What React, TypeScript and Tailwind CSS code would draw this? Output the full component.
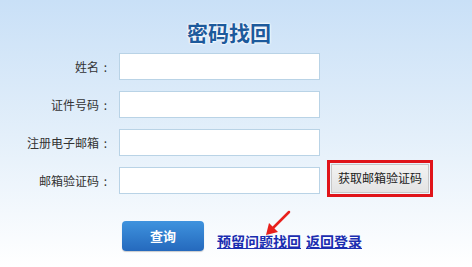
const FONT = { fontFamily: '"Microsoft YaHei", "Noto Sans CJK SC", "Noto Sans", sans-serif' };

const fields = ['姓名', '证件号码', '注册电子邮箱', '邮箱验证码'];

export default function App() {
  return (
    <div
      className="relative h-[267px] w-[472px] overflow-hidden bg-gradient-to-b from-[#c9e0f7] via-[#e3effa] to-white"
      style={FONT}
    >
      <h1
        className="pt-[19px] text-center text-[21px] font-bold leading-[26px] text-[#1d5a9c]"
        style={{ textShadow: '0 0 2px #fff, 0 0 2px #fff, 0 0 3px #fff' }}
      >
        <span className="relative left-[-7px]">密码找回</span>
      </h1>

      <div className="mt-[8px] flex flex-col gap-[11px]">
        {fields.map((label, i) => (
          <div key={label} className="flex h-[27px] items-center">
            <label className="flex w-[112px] justify-end text-[12px] text-[#333]">
              {label}
              <span className="inline-block w-[13px] text-center">:</span>
            </label>
            <input
              className="ml-[7px] h-[27px] w-[201px] border border-[#b9d3e6] bg-white px-1 text-[12px] outline-none"
              type="text"
            />
            {i === 3 && (
              <div className="ml-[7px] mt-[-5px] border-[3px] border-[#e0141a] p-[1px]">
                <button className="h-[29px] w-[98px] border border-[#c8c8c8] bg-gradient-to-b from-[#f2f2f2] to-[#e4e4e4] text-[12px] text-[#222]">
                  获取邮箱验证码
                </button>
              </div>
            )}
          </div>
        ))}
      </div>

      <div className="mt-[26px] flex items-center pl-[122px]">
        <button className="h-[30px] w-[82px] rounded-[4px] bg-gradient-to-b from-[#3f93de] to-[#2569bd] text-[13px] font-bold text-white shadow-[0_1px_1px_rgba(0,0,0,0.2)]">
          查询
        </button>
        <a href="#" className="ml-[13px] mt-[11px] text-[14px] font-bold text-[#1a2db0] underline">
          预留问题找回
        </a>
        <a href="#" className="ml-[5px] mt-[11px] text-[14px] font-bold text-[#1a2db0] underline">
          返回登录
        </a>
      </div>

      <svg className="absolute left-[262px] top-[208px]" width="32" height="32" viewBox="0 0 32 32">
        <line x1="27" y1="4" x2="10" y2="21" stroke="#e8201c" strokeWidth="2.5" strokeLinecap="round" />
        <polygon points="4,27 7,15 16,24" fill="#e8201c" />
      </svg>
    </div>
  );
}
